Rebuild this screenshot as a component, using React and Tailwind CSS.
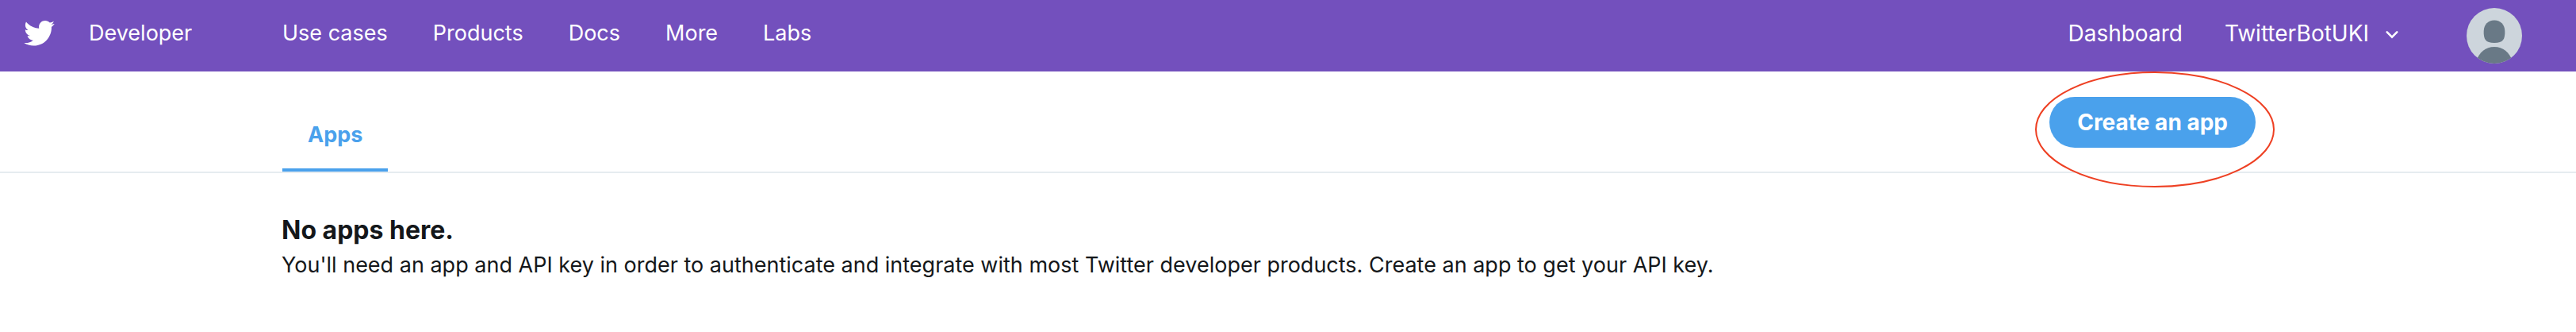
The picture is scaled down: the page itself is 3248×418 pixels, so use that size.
const links = ["Use cases", "Products", "Docs", "More", "Labs"];

function TwitterBird() {
  return (
    <svg viewBox="0.8 2.7 22.9 19.4" className="h-[33px] w-[39px]" fill="currentColor" aria-hidden="true">
      <path d="M23.643 4.937c-.835.37-1.732.62-2.675.733.962-.576 1.7-1.49 2.048-2.578-.9.534-1.897.922-2.958 1.13-.85-.904-2.06-1.47-3.4-1.47-2.572 0-4.658 2.086-4.658 4.66 0 .364.042.718.12 1.06-3.873-.195-7.304-2.05-9.602-4.868-.4.69-.63 1.49-.63 2.342 0 1.616.823 3.043 2.072 3.878-.764-.025-1.482-.234-2.11-.583v.06c0 2.257 1.605 4.14 3.737 4.568-.392.106-.803.162-1.227.162-.3 0-.593-.028-.877-.082.593 1.85 2.313 3.198 4.352 3.234-1.595 1.25-3.604 1.995-5.786 1.995-.376 0-.747-.022-1.112-.065 2.062 1.323 4.51 2.093 7.14 2.093 8.57 0 13.255-7.098 13.255-13.254 0-.2-.005-.402-.014-.602.91-.658 1.7-1.477 2.323-2.41z" />
    </svg>
  );
}

function Avatar() {
  return (
    <svg viewBox="0 0 70 70" className="size-[70px]" aria-hidden="true">
      <clipPath id="avatar-round">
        <circle cx="35" cy="35" r="35" />
      </clipPath>
      <g clipPath="url(#avatar-round)">
        <rect width="70" height="70" fill="#cdd5dc" />
        <path
          d="M35 15.500C43 15.500 48 21 48.300 29C48.600 39 46.500 44 35 44C23.500 44 21.400 39 21.700 29C22 21 27 15.500 35 15.500Z"
          fill="#697986"
        />
        <path d="M35 49C46 49 54 56 57.500 66V72H12.500V66C16 56 24 49 35 49Z" fill="#697986" />
      </g>
    </svg>
  );
}

export default function App() {
  return (
    <div className="bg-white font-['Inter',sans-serif] text-[27px] leading-9 text-[#14171a]">
      <header className="flex h-[90px] items-start bg-[#7350bd] pr-[68px] pl-[30px] text-white">
        <a href="#home" className="mt-6 flex w-[326px] shrink-0 items-center gap-[43px]">
          <TwitterBird />
          <span>Developer</span>
        </a>
        <nav className="mt-6 flex gap-[57px] whitespace-nowrap">
          {links.map((label) => (
            <a key={label} href="#nav">
              {label}
            </a>
          ))}
        </nav>
        <div className="mt-6 ml-auto flex gap-[53px] text-[28px] whitespace-nowrap">
          <a href="#dashboard">Dashboard</a>
          <button type="button" className="flex items-center gap-5">
            TwitterBotUKI
            <svg viewBox="0 0 18 16" className="h-4 w-[18px]" fill="none" stroke="currentColor" aria-hidden="true">
              <path d="M2.700 6.400L9 12.700L15.300 6.400" strokeWidth="2.500" strokeLinecap="round" />
            </svg>
          </button>
        </div>
        <button type="button" aria-label="Account" className="mt-[10px] ml-[85px]">
          <Avatar />
        </button>
      </header>

      <div className="flex items-end justify-between border-b-2 border-[#e6ecf0] pr-[404px] pl-[356px]">
        <nav>
          <a
            href="#apps"
            className="block border-b-4 border-[#4aa1ec] px-8 pt-[62px] pb-6 font-bold text-[#4aa1ec]"
          >
            Apps
          </a>
        </nav>
        <div className="relative mb-[30px]">
          <button type="button" className="h-16 rounded-full bg-[#4aa1ec] px-[35px] text-[28px] font-bold text-white">
            Create an app
          </button>
          <svg
            viewBox="0 0 304 148"
            className="pointer-events-none absolute -top-[33px] -left-[19px] h-[148px] w-[304px]"
            fill="none"
            aria-hidden="true"
          >
            <ellipse cx="152" cy="74" rx="150" ry="72" stroke="#ee4023" strokeWidth="2" />
          </svg>
        </div>
      </div>

      <main className="px-[355px] pt-[51px]">
        <h1 className="text-[32px] leading-[42px] font-bold">No apps here.</h1>
        <p className="leading-[46px]">
          You'll need an app and API key in order to authenticate and integrate with most Twitter developer
          products. Create an app to get your API key.
        </p>
      </main>
    </div>
  );
}
